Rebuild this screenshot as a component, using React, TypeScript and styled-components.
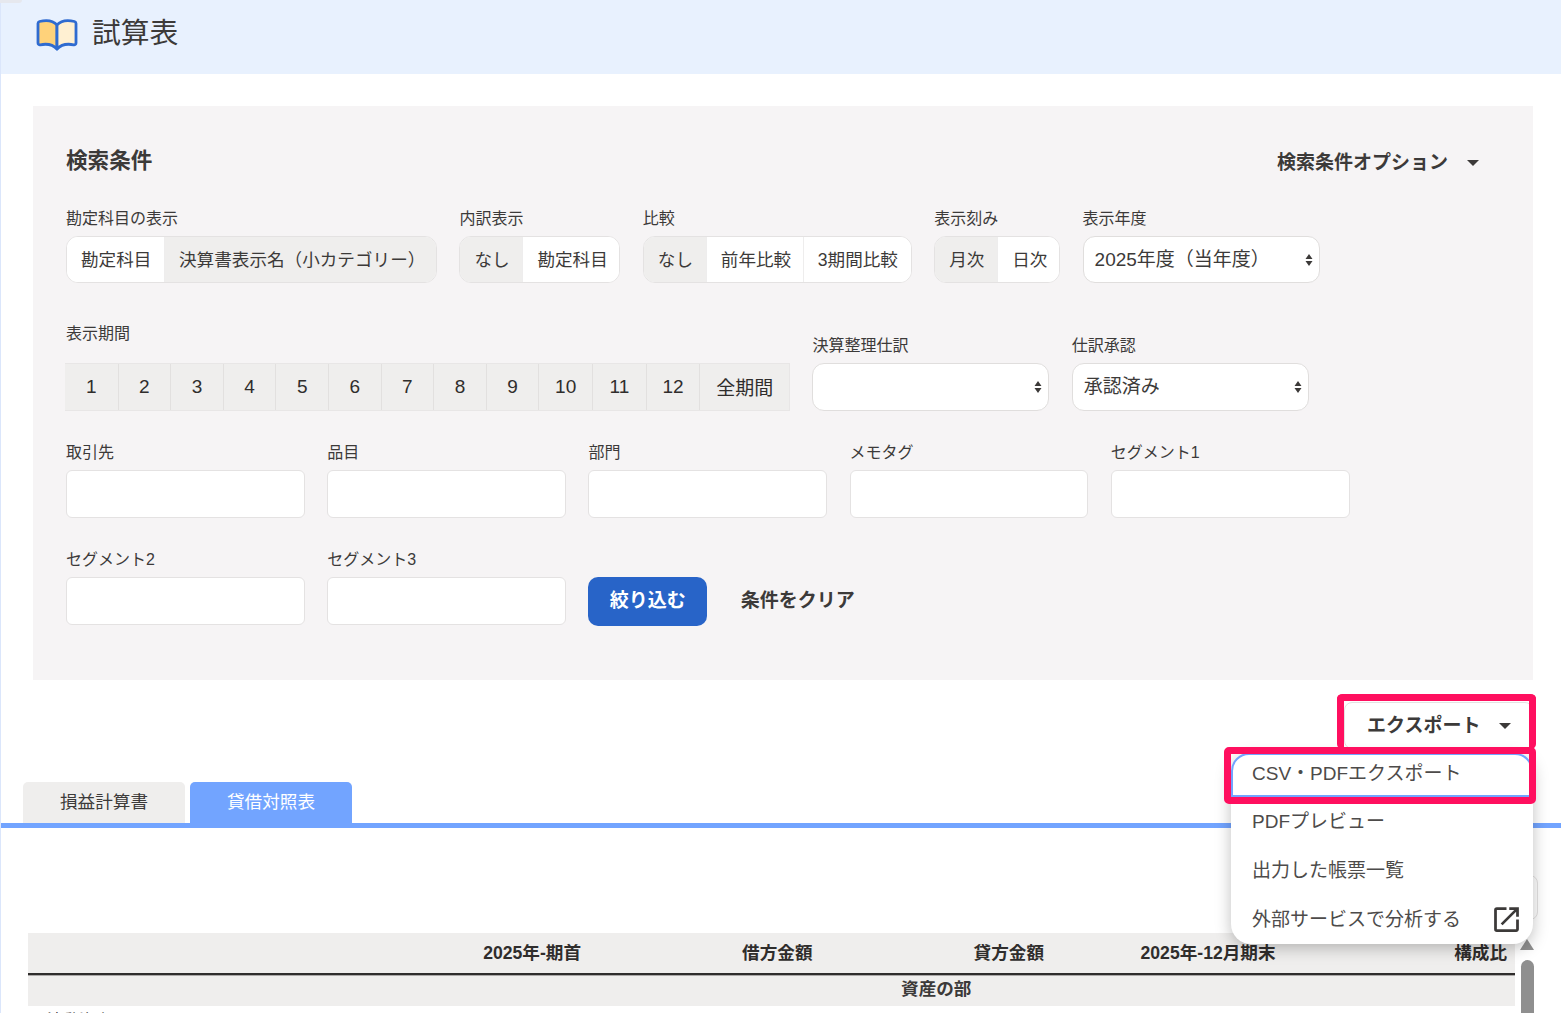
import React, { FC } from 'react';
import styled, { createGlobalStyle } from 'styled-components';
import { MdOpenInNew } from 'react-icons/md';

const GlobalStyle = createGlobalStyle`
  html, body {
    margin: 0;
    height: 1013px;
    overflow: hidden;
    background: #fff;
    color: #3c3a39;
    font-family: "Liberation Sans", "Noto Sans CJK JP", sans-serif;
  }
  * {
    box-sizing: border-box;
  }
`;

const Page = styled.div`
  display: flex;
  height: 1013px;
  overflow: hidden;
`;

const SideEdge = styled.div`
  position: relative;
  flex: 0 0 1px;
  background: #dbe6fb;

  &::before {
    content: '';
    position: absolute;
    top: 0;
    left: 0;
    width: 22px;
    height: 3px;
    border-radius: 0 0 4px 0;
    background: #e6e8ee;
  }
`;

const Main = styled.main`
  flex: 1;
  min-width: 0;
`;

const Header = styled.header`
  display: flex;
  align-items: center;
  gap: 14px;
  height: 74px;
  padding: 0 0 7px 35px;
  background: #e8f1fe;
`;

const Title = styled.h1`
  margin: 0;
  font-size: 28.8px;
  font-weight: 400;
  line-height: 1;
`;

const Panel = styled.section`
  margin: 32px 28px 0 32px;
  height: 574px;
  padding: 33px 33px 0;
  background: #f6f4f5;
`;

const PanelHead = styled.div`
  display: flex;
  justify-content: space-between;
  align-items: center;
  height: 42px;
  margin-bottom: 27px;
`;

const PanelTitle = styled.h2`
  margin: 0 0 3px;
  font-size: 21.6px;
  font-weight: 700;
`;

const Caret = styled.span`
  display: inline-block;
  width: 0;
  height: 0;
  margin: 4px 0 0 19px;
  border-left: 6px solid transparent;
  border-right: 6px solid transparent;
  border-top: 6px solid #3c3a39;
`;

const OptionToggle = styled.div`
  display: flex;
  align-items: center;
  padding-right: 21px;
  font-size: 19px;
  font-weight: 700;

  ${Caret} {
    margin-top: 6px;
  }
`;

const Row = styled.div<{ $mt?: number; $end?: boolean }>`
  display: flex;
  gap: 22.4px;
  margin-top: ${(p) => p.$mt ?? 0}px;
  align-items: ${(p) => (p.$end ? 'flex-end' : 'flex-start')};
`;

const Field = styled.div<{ $w?: number }>`
  ${(p) => (p.$w ? `width: ${p.$w}px;` : '')}
  flex: none;
`;

const Label = styled.div<{ $gap?: number }>`
  height: 20px;
  margin-bottom: ${(p) => p.$gap ?? 8}px;
  font-size: 16px;
  line-height: 22px;
  white-space: nowrap;
`;

const Segments = styled.div`
  display: flex;
  height: 47px;
  border: 1px solid #e4e2e2;
  border-radius: 12px;
  overflow: hidden;
  background: #fff;
`;

const Segment = styled.div<{ $w: number; $gray?: boolean }>`
  display: flex;
  align-items: center;
  justify-content: flex-start;
  width: ${(p) => p.$w}px;
  padding: 0 0 3px 14px;
  font-size: 17.6px;
  white-space: nowrap;
  background: ${(p) => (p.$gray ? '#efeeed' : '#fff')};

  & + & {
    border-left: 1px solid #eeeded;
  }
`;

const SelectBox = styled.div<{ $h: number }>`
  display: flex;
  align-items: center;
  justify-content: space-between;
  height: ${(p) => p.$h}px;
  padding: 0 6px 0 11px;
  border: 1px solid #e0dedd;
  border-radius: 12px;
  background: #fff;
  font-size: 19px;
`;

const SelectText = styled.span`
  padding-bottom: 5px;
`;

const PeriodGrid = styled.div`
  display: grid;
  grid-template-columns: repeat(9, 52.6px) repeat(3, 53.7px) 1fr;
  width: 725px;
  height: 48px;
  margin-left: -1px;
  border: 1px solid #e8e6e6;
  border-left: 0;
  background: #efeeed;
`;

const PeriodCell = styled.div`
  display: flex;
  align-items: center;
  justify-content: center;
  font-size: 19px;
  color: #2f2d2c;

  & + & {
    border-left: 1px solid #e2e0df;
  }
`;

const WidePeriodLabel = styled.span`
  padding-bottom: 2px;
`;

const TextInput = styled.input`
  display: block;
  width: 100%;
  height: 48px;
  border: 1px solid #e4e2e2;
  border-radius: 6px;
  background: #fff;
  outline: none;
`;

const SubmitButton = styled.button`
  width: 119px;
  height: 49px;
  margin-top: 28px;
  padding-bottom: 8px;
  border: 0;
  border-radius: 10px;
  background: #2864c8;
  color: #fff;
  font: inherit;
  font-size: 19px;
  font-weight: 700;
`;

const ClearLink = styled.div`
  margin: 28px 0 0 11px;
  font-size: 19px;
  font-weight: 700;
  line-height: 47px;
`;

const ExportRow = styled.div`
  display: flex;
  justify-content: flex-end;
  margin: 22px 28px 0 0;
`;

const ExportWrap = styled.div`
  position: relative;
  width: 189px;
`;

const ExportButton = styled.div`
  display: flex;
  align-items: center;
  height: 47px;
  padding: 0 0 5px 22px;
  border: 1px solid #e4e2e2;
  border-radius: 8px;
  background: #fff;
  font-size: 19px;
  font-weight: 700;

  ${Caret} {
    margin-top: 6px;
  }
`;

const Highlight = styled.div`
  position: absolute;
  z-index: 4;
  border: 7px solid #ff0f5f;
  border-radius: 5px;
  pointer-events: none;
`;

const ButtonHighlight = styled(Highlight)`
  top: -8px;
  left: -7px;
  width: 199px;
  height: 55px;
  border-bottom: 0;
`;

const ItemHighlight = styled(Highlight)`
  top: 45px;
  left: -120px;
  width: 312px;
  height: 57px;
`;

const Menu = styled.div`
  position: absolute;
  z-index: 3;
  top: 51px;
  right: 0;
  width: 302px;
  height: 191px;
  border-radius: 20px;
  background: #fff;
  box-shadow: 0 4px 16px rgba(0, 0, 0, 0.25);
`;

const MenuItem = styled.div<{ $focus?: boolean; $h?: number }>`
  display: flex;
  align-items: center;
  justify-content: space-between;
  height: ${(p) => p.$h ?? 49}px;
  padding: 0 10px 4px 21px;
  font-size: 19px;
  color: #4d4b4a;
  white-space: nowrap;
  ${(p) =>
    p.$focus
      ? 'border: 2px solid #72a4ff; border-radius: 18px 18px 0 0; padding-left: 19px; padding-bottom: 7px;'
      : ''}

  svg {
    margin-top: 4px;
    color: #3c3a39;
  }
`;

const TabBar = styled.div`
  display: flex;
  gap: 5px;
  height: 46px;
  margin-top: 33px;
  padding-left: 22px;
  border-bottom: 5px solid #72a4ff;
`;

const Tab = styled.div<{ $active?: boolean }>`
  display: flex;
  align-items: center;
  justify-content: center;
  width: 162px;
  height: 41px;
  padding-bottom: 5px;
  border-radius: 5px 5px 0 0;
  font-size: 17.6px;
  background: ${(p) => (p.$active ? '#72a4ff' : '#efeeed')};
  color: ${(p) => (p.$active ? '#fff' : '#3c3a39')};
`;

const ToolRow = styled.div`
  display: flex;
  justify-content: flex-end;
  margin: 47px 23px 13px 0;
`;

const ToolBox = styled.div`
  width: 200px;
  height: 45px;
  border: 1px solid #e4e2e2;
  border-radius: 8px;
`;

const TableArea = styled.div`
  display: flex;
  margin-left: 27px;
`;

const Sheet = styled.div`
  flex: 0 0 1487px;
`;

const HeadRow = styled.div`
  position: relative;
  display: grid;
  grid-template-columns: 329.5px repeat(5, 231.5px);
  align-items: center;
  height: 42px;
  padding-bottom: 4px;
  border-bottom: 2px solid #2f2d2c;
  box-shadow: 0 1px 0 #aaa8a7;
  background: #efeeed;
`;

const HeadCell = styled.div`
  padding-right: 8px;
  text-align: right;
  font-size: 17.6px;
  font-weight: 700;
  color: #2f2d2c;
  white-space: nowrap;
`;

const SectionRow = styled.div`
  display: flex;
  justify-content: center;
  height: 31px;
  padding-left: 329.5px;
  background: #efeeed;
  font-size: 17.6px;
  font-weight: 700;
  line-height: 29px;
`;

const BodyRow = styled.div`
  padding: 5px 0 0 19px;
  font-size: 16px;
  line-height: 20px;
`;

const ScrollTrack = styled.div`
  display: flex;
  flex-direction: column;
  align-items: center;
  flex: 0 0 13px;
  margin-left: 5px;
  padding-top: 6px;
`;

const ScrollUp = styled.span`
  width: 0;
  height: 0;
  border-left: 7px solid transparent;
  border-right: 7px solid transparent;
  border-bottom: 11px solid #8f8f8f;
`;

const ScrollThumb = styled.div`
  width: 13px;
  height: 120px;
  margin-top: 10px;
  border-radius: 7px;
  background: #8f8f8f;
`;

const BookIcon: FC = () => (
  <svg width="42" height="34" viewBox="0 0 42 34">
    <path
      d="M21 8C17 3.5 10 3 3.5 4.5 2.6 4.8 2 5.5 2 6.5V26c0 1.3 1.1 2 2.2 1.8 6-1.2 12.5-.5 16.8 4.2Z"
      fill="#ffd27a"
      stroke="#2f6bd0"
      strokeWidth="2.8"
      strokeLinejoin="round"
    />
    <path
      d="M21 8c4-4.5 11-5 17.500-3.500.9.300 1.500 1 1.500 2V26c0 1.300-1.100 2-2.200 1.800-6-1.200-12.500-.5-16.800 4.200Z"
      fill="#fff0d2"
      stroke="#2f6bd0"
      strokeWidth="2.8"
      strokeLinejoin="round"
    />
  </svg>
);

const SelectArrows: FC = () => (
  <svg width="8" height="14" viewBox="0 0 8 14">
    <path d="M4 1 7.500 6H.5Z M4 13 .5 8h7Z" fill="#3c3a39" />
  </svg>
);

const periods = ['1', '2', '3', '4', '5', '6', '7', '8', '9', '10', '11', '12'];

const App: FC = () => {
  return (
    <Page>
      <GlobalStyle />
      <SideEdge />
      <Main>
        <Header>
          <BookIcon />
          <Title>試算表</Title>
        </Header>

        <Panel>
          <PanelHead>
            <PanelTitle>検索条件</PanelTitle>
            <OptionToggle>
              検索条件オプション
              <Caret />
            </OptionToggle>
          </PanelHead>

          <Row>
            <Field>
              <Label>勘定科目の表示</Label>
              <Segments>
                <Segment $w={97}>勘定科目</Segment>
                <Segment $w={272} $gray>決算書表示名（小カテゴリー）</Segment>
              </Segments>
            </Field>
            <Field>
              <Label>内訳表示</Label>
              <Segments>
                <Segment $w={62} $gray>なし</Segment>
                <Segment $w={97}>勘定科目</Segment>
              </Segments>
            </Field>
            <Field>
              <Label>比較</Label>
              <Segments>
                <Segment $w={62} $gray>なし</Segment>
                <Segment $w={97}>前年比較</Segment>
                <Segment $w={108}>3期間比較</Segment>
              </Segments>
            </Field>
            <Field>
              <Label>表示刻み</Label>
              <Segments>
                <Segment $w={62} $gray>月次</Segment>
                <Segment $w={62}>日次</Segment>
              </Segments>
            </Field>
            <Field $w={237}>
              <Label>表示年度</Label>
              <SelectBox $h={47}>
                <SelectText>2025年度（当年度）</SelectText>
                <SelectArrows />
              </SelectBox>
            </Field>
          </Row>

          <Row $mt={40} $end>
            <Field>
              <Label $gap={20}>表示期間</Label>
              <PeriodGrid>
                {periods.map((p) => (
                  <PeriodCell key={p}>{p}</PeriodCell>
                ))}
                <PeriodCell>
                  <WidePeriodLabel>全期間</WidePeriodLabel>
                </PeriodCell>
              </PeriodGrid>
            </Field>
            <Field $w={237}>
              <Label>決算整理仕訳</Label>
              <SelectBox $h={48}>
                <span />
                <SelectArrows />
              </SelectBox>
            </Field>
            <Field $w={237}>
              <Label>仕訳承認</Label>
              <SelectBox $h={48}>
                <SelectText>承認済み</SelectText>
                <SelectArrows />
              </SelectBox>
            </Field>
          </Row>

          <Row $mt={31}>
            {['取引先', '品目', '部門', 'メモタグ', 'セグメント1'].map((l) => (
              <Field $w={238.8} key={l}>
                <Label>{l}</Label>
                <TextInput />
              </Field>
            ))}
          </Row>

          <Row $mt={31}>
            <Field $w={238.8}>
              <Label>セグメント2</Label>
              <TextInput />
            </Field>
            <Field $w={238.8}>
              <Label>セグメント3</Label>
              <TextInput />
            </Field>
            <SubmitButton>絞り込む</SubmitButton>
            <ClearLink>条件をクリア</ClearLink>
          </Row>
        </Panel>

        <ExportRow>
          <ExportWrap>
            <ExportButton>
              エクスポート
              <Caret />
            </ExportButton>
            <ButtonHighlight />
            <ItemHighlight />
            <Menu>
              <MenuItem $focus $h={44}>CSV・PDFエクスポート</MenuItem>
              <MenuItem>PDFプレビュー</MenuItem>
              <MenuItem>出力した帳票一覧</MenuItem>
              <MenuItem>
                外部サービスで分析する
                <MdOpenInNew size={33} />
              </MenuItem>
            </Menu>
          </ExportWrap>
        </ExportRow>

        <TabBar>
          <Tab>損益計算書</Tab>
          <Tab $active>貸借対照表</Tab>
        </TabBar>

        <ToolRow>
          <ToolBox />
        </ToolRow>

        <TableArea>
          <Sheet>
            <HeadRow>
              <span />
              <HeadCell>2025年-期首</HeadCell>
              <HeadCell>借方金額</HeadCell>
              <HeadCell>貸方金額</HeadCell>
              <HeadCell>2025年-12月期末</HeadCell>
              <HeadCell>構成比</HeadCell>
            </HeadRow>
            <SectionRow>資産の部</SectionRow>
            <BodyRow>流動資産</BodyRow>
          </Sheet>
          <ScrollTrack>
            <ScrollUp />
            <ScrollThumb />
          </ScrollTrack>
        </TableArea>
      </Main>
    </Page>
  );
};

export default App;
